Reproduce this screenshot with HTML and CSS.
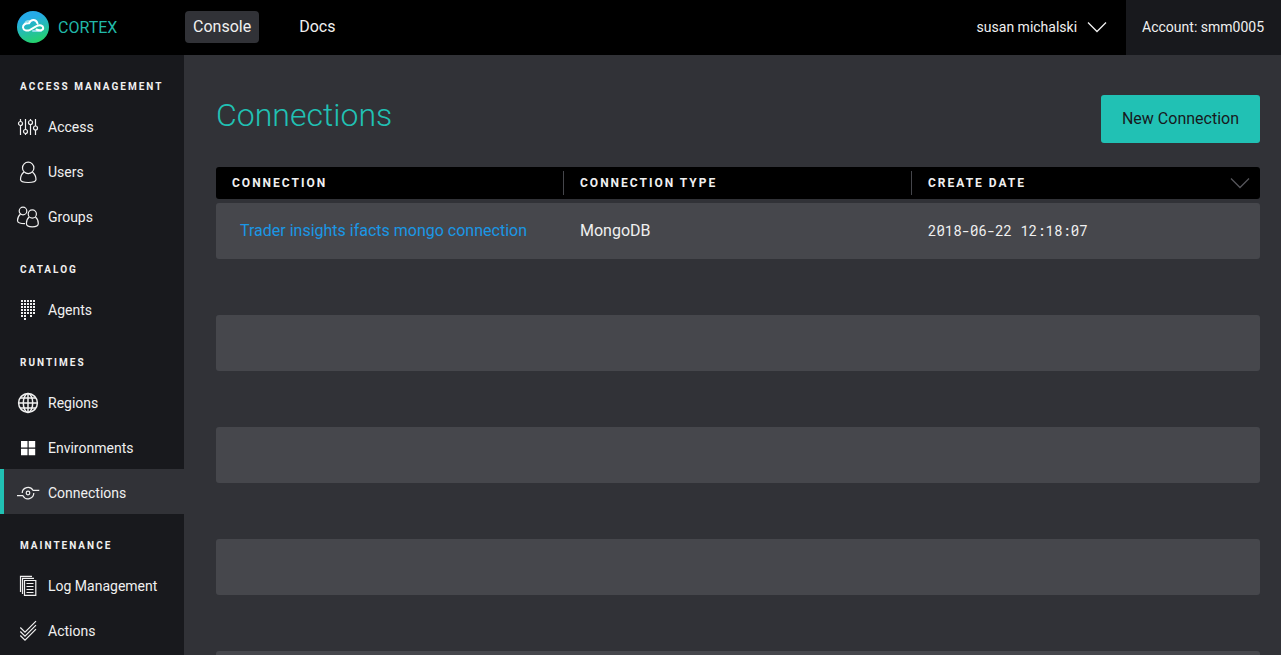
FILE: index.html
```html
<!DOCTYPE html>
<html lang="en">
<head>
<meta charset="utf-8">
<title>Cortex Console</title>
<link rel="stylesheet" href="styles.css">
</head>
<body>
<header class="topbar">
  <a class="brand" href="#">
    <svg class="logo" viewBox="0 0 32 32" aria-hidden="true">
      <defs><linearGradient id="sky" x1="0.35" y1="0" x2="0.65" y2="1"><stop offset="0.2" stop-color="#25abe8"/><stop offset="1" stop-color="#24d366"/></linearGradient></defs>
      <circle cx="16" cy="16" r="16" fill="url(#sky)"/>
      <g fill="none" stroke-linecap="round" stroke-linejoin="round" stroke-width="2">
        <path d="M8 12.500C9 10 11.500 9.500 13 10.500M16 20H24" stroke="#8fdcea"/>
        <path d="M20.500 12.500C19 8 14 8 12 12.200C8 12 5.800 14 6 16.500C6.300 19.500 10 20.300 13 18.800L19.500 15.200C23 13.500 26.200 14.500 26.200 17C26.200 19.500 22.500 20 19.500 18.500" stroke="#fff"/>
      </g>
    </svg>
    <span>CORTEX</span>
  </a>
  <nav class="topnav">
    <a class="toplink toplink-active" href="#">Console</a>
    <a class="toplink" href="#">Docs</a>
  </nav>
  <button class="user" type="button">susan michalski
    <svg class="chevron" viewBox="0 0 20 12" aria-hidden="true"><path d="M1 1.500L10 10.500L19 1.500"/></svg>
  </button>
  <div class="account">Account: smm0005</div>
</header>
<div class="shell">
  <nav class="sidebar">
    <h2 class="group-title">ACCESS MANAGEMENT</h2>
    <a class="item" href="#"><svg class="icon" viewBox="0 0 24 24"><path d="M4.500 4V6.500M4.500 10.500V20M9.500 4V14.500M9.500 18.500V20M14.500 4V5.500M14.500 9.500V20M19.500 4V11M19.500 15V20"/><circle cx="4.500" cy="8.500" r="2"/><circle cx="9.500" cy="16.500" r="2"/><circle cx="14.500" cy="7.500" r="2"/><circle cx="19.500" cy="13" r="2"/></svg>Access</a>
    <a class="item" href="#"><svg class="icon" viewBox="0 0 24 24"><circle cx="12.200" cy="7.900" r="5.700"/><path d="M8 12C5.500 14 4.500 17 4.500 19.500C4.500 22 8 22.500 12.200 22.500S20 22 20 19.500C20 17 18.800 14 16.400 12"/></svg>Users</a>
    <a class="item" href="#"><svg class="icon" viewBox="0 0 24 24"><circle cx="7" cy="6" r="3.800"/><circle cx="16.300" cy="9" r="4.100"/><path d="M4.500 9C2.500 10.800 1.500 13 1.500 15.500C1.500 18 4 18.700 9 18.700M13.200 12C11.300 13.500 10.400 16 10.400 18.500C10.400 21 13 21.900 16.300 21.900S22.300 21 22.300 18.500C22.300 16 21.400 13.500 19.400 12"/></svg>Groups</a>
    <h2 class="group-title">CATALOG</h2>
    <a class="item" href="#"><svg class="icon icon-dots" viewBox="0 0 24 24"><path d="M5 3H20M5 6H20M5 9H20M5 12H20M5 15H20M5 18H10M14 18H16M8 21H10"/></svg>Agents</a>
    <h2 class="group-title">RUNTIMES</h2>
    <a class="item" href="#"><svg class="icon icon-globe" viewBox="0 0 24 24"><circle cx="12" cy="12" r="9.400"/><ellipse cx="12" cy="12" rx="4.700" ry="9.400"/><path d="M12 2.500V21.500M2.500 12H21.500M4.500 7H19.500M4.500 17H19.500"/></svg>Regions</a>
    <a class="item" href="#"><svg class="icon icon-solid" viewBox="0 0 24 24"><path d="M5 5H11.500V11.500H5ZM12.700 5H19.200V11.500H12.700ZM5 12.700H11.500V19.200H5ZM12.700 12.700H19.200V19.200H12.700Z"/></svg>Environments</a>
    <a class="item item-active" href="#" aria-current="page"><svg class="icon" viewBox="0 0 24 24"><circle cx="12" cy="12" r="1.800"/><path d="M6.200 12A5.800 5.800 0 0 1 17 9.300H23.300M1 14.700H6.900A5.800 5.800 0 0 0 17.800 12"/></svg>Connections</a>
    <h2 class="group-title">MAINTENANCE</h2>
    <a class="item" href="#"><svg class="icon" viewBox="0 0 24 24"><path d="M8.500 6.500H19.800V21.300H8.500ZM6.500 20V4.300H18M4.500 18V2.300H16M10.500 9.500H17.500M10.500 12.500H17.500M10.500 15.500H17.500M10.500 18.500H17.500"/></svg>Log Management</a>
    <a class="item" href="#"><svg class="icon" viewBox="0 0 24 24"><path d="M4.300 8.500L9 13.200L20 2.200M4.300 12.500L9 17.200L20 6.200M4.300 16.500L9 21.200L20 10.200"/></svg>Actions</a>
  </nav>
  <main class="content">
    <div class="page-head">
      <h1 class="page-title">Connections</h1>
      <button class="primary" type="button">New Connection</button>
    </div>
    <table class="grid">
      <thead>
        <tr>
          <th scope="col"><div class="head-cell">CONNECTION</div></th>
          <th scope="col"><div class="head-cell">CONNECTION TYPE</div></th>
          <th scope="col"><div class="head-cell">CREATE DATE<svg class="chevron chevron-dim" viewBox="0 0 20 12" aria-hidden="true"><path d="M1 1.500L10 10.500L19 1.500"/></svg></div></th>
        </tr>
      </thead>
      <tbody>
        <tr><td class="name"><a href="#">Trader insights ifacts mongo connection</a></td><td>MongoDB</td><td class="date">2018-06-22 12:18:07</td></tr>
        <tr><td></td><td></td><td></td></tr>
        <tr><td></td><td></td><td></td></tr>
        <tr><td></td><td></td><td></td></tr>
        <tr><td></td><td></td><td></td></tr>
        <tr><td></td><td></td><td></td></tr>
        <tr><td></td><td></td><td></td></tr>
        <tr><td></td><td></td><td></td></tr>
        <tr><td></td><td></td><td></td></tr>
      </tbody>
    </table>
  </main>
</div>
</body>
</html>
```
FILE: styles.css
```css
* { box-sizing: border-box; }
body {
  margin: 0;
  height: 100vh;
  overflow: hidden;
  display: flex;
  flex-direction: column;
  background: #313237;
  color: #f0f0f0;
  font-family: Roboto, "Liberation Sans", sans-serif;
  font-size: 16px;
}
a { color: inherit; text-decoration: none; }
button { border: 0; font: inherit; color: inherit; cursor: pointer; }
h1, h2 { margin: 0; }

.topbar { display: flex; flex: none; align-items: center; height: 55px; background: #000; }
.brand { display: flex; align-items: center; gap: 9px; width: 185px; padding: 0 0 1px 17px; color: #21b8a9; }
.logo { width: 32px; height: 32px; }
.topnav { display: flex; flex: 1; gap: 32px; padding-bottom: 2px; }
.toplink { padding: 0 8px; border-radius: 4px; line-height: 32px; }
.toplink-active { background: #313237; }
.user { display: flex; align-items: center; gap: 10px; padding: 0 19px 1px; background: none; font-size: 14px; }
.chevron { width: 20px; height: 12px; fill: none; stroke: #f0f0f0; stroke-width: 1.3; }
.chevron-dim { stroke: #55555a; }
.account { align-self: stretch; display: flex; align-items: center; padding: 0 17px 1px 16px; background: #18191d; font-size: 14px; }

.shell { display: flex; flex: 1; min-height: 0; }
.sidebar { flex: none; width: 184px; overflow: hidden; background: #18191d; }
.group-title { padding: 26px 0 10px 20px; font-size: 10px; line-height: 12px; font-weight: 700; letter-spacing: 2px; white-space: nowrap; }
.item { display: flex; align-items: center; gap: 8px; height: 45px; padding: 3px 0 0 16px; font-size: 14px; }
.item-active { background: #313237; box-shadow: inset 4px 0 #21c1b4; }
.icon { flex: none; width: 24px; height: 24px; fill: none; stroke: #f0f0f0; stroke-width: 1.2; }
.icon-dots { stroke-width: 2; stroke-dasharray: 2 1; }
.icon-globe { stroke-width: 1.5; }
.icon-solid { fill: #fff; stroke: none; }

.content { flex: 1; min-width: 0; overflow: hidden; padding: 40px 21px 0 32px; }
.page-head { display: flex; justify-content: space-between; height: 48px; margin-bottom: 24px; }
.page-title { font-size: 32px; line-height: 40px; font-weight: 300; color: #21c1b4; }
.primary { padding: 0 21px 1px; border-radius: 3px; background: #21c1b4; color: #18191d; }

.grid { width: 100%; table-layout: fixed; border-spacing: 0; }
.grid th { height: 32px; padding: 4px 0; background: #000; font-size: 12px; text-align: left; }
.head-cell { display: flex; align-items: center; justify-content: space-between; height: 24px; padding: 0 10px 0 16px; border-right: 1px solid #45464b; letter-spacing: 2px; }
.grid th:last-child .head-cell { border-right: 0; }
.grid tbody::before { content: ""; display: block; height: 4px; }
.grid td { height: 56px; padding: 0 16px 2px; white-space: nowrap; }
.grid tbody tr:nth-child(odd) td { background: #46474c; }
.grid th:first-child, .grid td:first-child { border-radius: 3px 0 0 3px; }
.grid th:last-child, .grid td:last-child { border-radius: 0 3px 3px 0; }
.grid .name { padding-left: 24px; color: #1a97e5; }
.grid .date { font-family: "Roboto Mono", "Liberation Mono", monospace; font-size: 14px; }
```
